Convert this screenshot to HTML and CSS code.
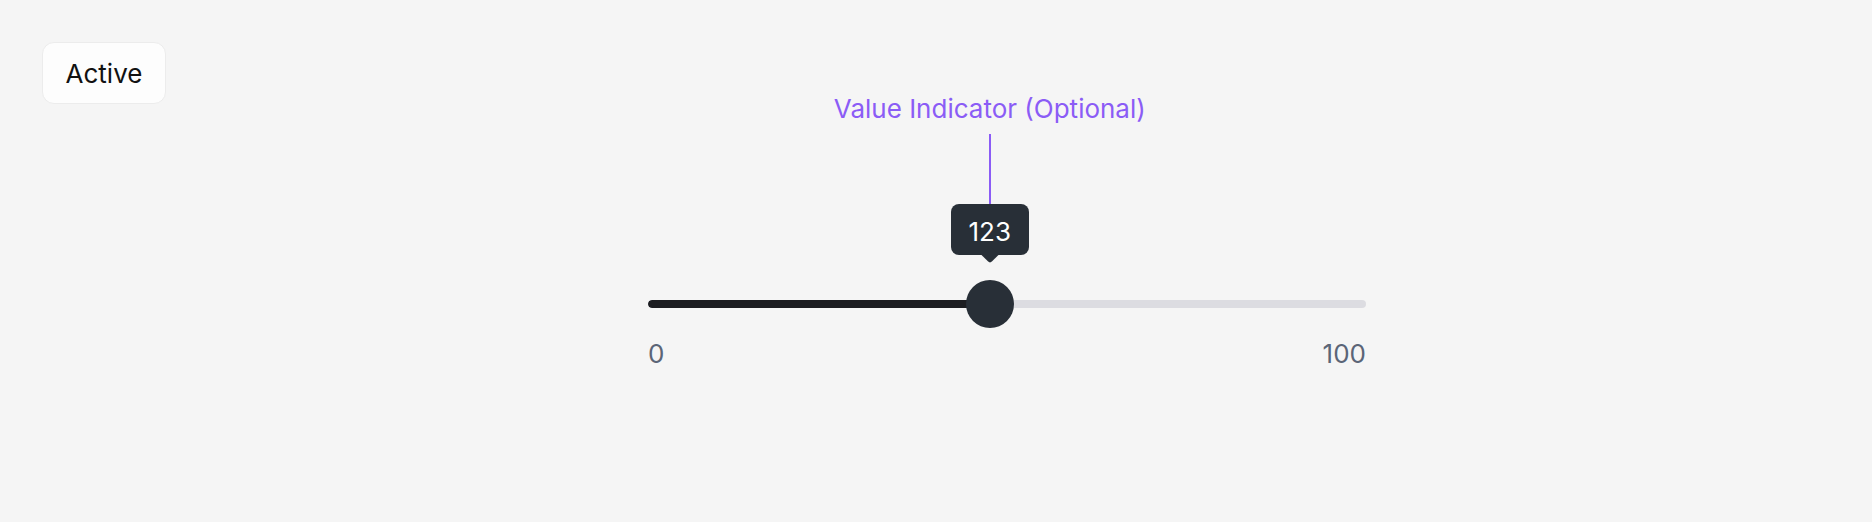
FILE: index.html
```html
<!DOCTYPE html>
<html lang="en">
<head>
    <meta charset="UTF-8">
    <meta name="viewport" content="width=device-width, initial-scale=1.0">
    <title>Slider - Active</title>
    <link rel="stylesheet" href="styles.css">
</head>
<body>
    <div class="page">
        <!-- State badge -->
        <div class="state-badge">Active</div>

        <!-- Slider with value indicator -->
        <div class="slider">
            <div class="track-area">
                <div class="track">
                    <div class="track-fill" style="width: 47.6%"></div>
                </div>
                <div class="thumb" style="left: 47.6%">
                    <div class="indicator">
                        <span class="annotation-label">Value Indicator (Optional)</span>
                        <span class="annotation-line"></span>
                        <div class="tooltip">123</div>
                    </div>
                </div>
            </div>
            <div class="slider-labels">
                <span>0</span>
                <span>100</span>
            </div>
        </div>
    </div>
</body>
</html>
```

FILE: styles.css
```css
* {
    margin: 0;
    padding: 0;
    box-sizing: border-box;
    font-family: Inter, 'Noto Sans', sans-serif;
}

body {
    background-color: #f5f5f5;
    min-height: 100vh;
}

.page {
    display: flex;
    align-items: flex-start;
    padding: 42px;
}

.state-badge {
    width: 124px;
    height: 62px;
    display: flex;
    align-items: center;
    justify-content: center;
    background-color: #fdfdfd;
    border: 1px solid #ececec;
    border-radius: 12px;
    font-size: 26px;
    color: #111;
}

.slider {
    width: 718px;
    margin-left: 482px;
    padding-top: 238px;
}

.track-area {
    position: relative;
    height: 48px;
    display: flex;
    align-items: center;
}

.track {
    width: 100%;
    height: 8px;
    border-radius: 4px;
    background-color: #dcdce1;
    overflow: hidden;
}

.track-fill {
    height: 100%;
    border-radius: 4px;
    background-color: #1c1d21;
}

.thumb {
    position: absolute;
    top: 0;
    width: 48px;
    height: 48px;
    border-radius: 50%;
    background-color: #282f37;
    transform: translateX(-50%);
}

.indicator {
    position: absolute;
    left: 50%;
    bottom: calc(100% + 25px);
    transform: translateX(-50%);
    display: flex;
    flex-direction: column;
    align-items: center;
}

.annotation-label {
    font-size: 26px;
    line-height: 31px;
    color: #8b5cf6;
    white-space: nowrap;
}

.annotation-line {
    width: 2px;
    height: 70px;
    margin-top: 10px;
    background-color: #8b5cf6;
}

.tooltip {
    position: relative;
    padding: 12px 18px 8px;
    border-radius: 8px;
    background-color: #282f37;
    color: #fff;
    font-size: 26px;
    line-height: 31px;
}

.tooltip::after {
    content: '';
    position: absolute;
    left: 50%;
    top: 100%;
    width: 12px;
    height: 12px;
    margin-left: -6px;
    margin-top: -6px;
    background-color: #282f37;
    border-radius: 0 0 3px 0;
    transform: rotate(45deg);
}

.slider-labels {
    display: flex;
    justify-content: space-between;
    margin-top: 10px;
    font-size: 26px;
    line-height: 31px;
    color: #5b6577;
}
```
